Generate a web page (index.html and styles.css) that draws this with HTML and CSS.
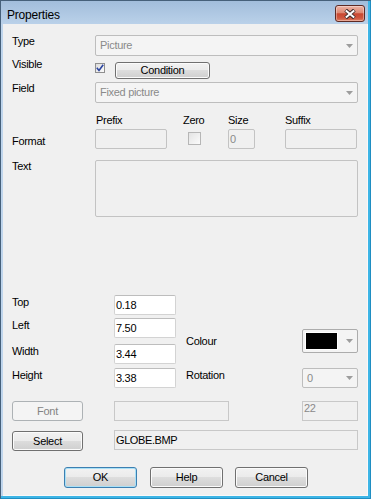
FILE: index.html
```html
<!DOCTYPE html>
<html lang="en">
<head>
<meta charset="utf-8">
<title>Properties</title>
<link rel="stylesheet" href="styles.css">
</head>
<body>
<div class="window">
  <div class="titlebar">
    <span class="title">Properties</span>
    <div class="close">
      <svg width="12" height="10" viewBox="0 0 12 10"><path d="M1.6 1 L10.4 9 M10.4 1 L1.6 9" stroke="#3e2c2a" stroke-width="3.8" fill="none"/><path d="M1.8 1.4 L10.2 8.6 M10.2 1.4 L1.8 8.6" stroke="#ffffff" stroke-width="2" fill="none"/></svg>
    </div>
  </div>
  <div class="client">
    <div class="row r-type">
      <span class="lbl">Type</span>
      <div class="combo dis w-wide"><span class="ctext">Picture</span><svg class="arrow" width="7" height="4" viewBox="0 0 7 4"><polygon points="0,0 7,0 3.5,4" fill="#9d9d9d"/></svg></div>
    </div>
    <div class="row r-visible">
      <span class="lbl">Visible</span>
      <span class="check on"><svg width="8" height="8" viewBox="0 0 8 8"><path d="M0.8 3.8 L3 6.4 L7.2 0.8" stroke="#2b44a0" stroke-width="1.6" fill="none"/></svg></span>
      <button class="btn b-cond">Condition</button>
    </div>
    <div class="row r-field">
      <span class="lbl">Field</span>
      <div class="combo dis w-wide"><span class="ctext">Fixed picture</span><svg class="arrow" width="7" height="4" viewBox="0 0 7 4"><polygon points="0,0 7,0 3.5,4" fill="#9d9d9d"/></svg></div>
    </div>
    <div class="row r-head">
      <span class="lbl"></span>
      <span class="h h-prefix">Prefix</span>
      <span class="h h-zero">Zero</span>
      <span class="h h-size">Size</span>
      <span class="h">Suffix</span>
    </div>
    <div class="row r-format">
      <span class="lbl lbl-format">Format</span>
      <span class="edit dis e-prefix"></span>
      <span class="check zero"></span>
      <span class="edit dis e-size">0</span>
      <span class="edit dis e-suffix"></span>
    </div>
    <div class="row r-text">
      <span class="lbl">Text</span>
      <span class="edit dis e-text"></span>
    </div>
    <div class="geom">
      <div class="gcol">
        <div class="grow"><span class="glbl">Top</span><span class="edit num">0.18</span></div>
        <div class="grow g-left"><span class="glbl">Left</span><span class="edit num">7.50</span></div>
        <div class="grow g-width"><span class="glbl">Width</span><span class="edit num">3.44</span></div>
        <div class="grow g-height"><span class="glbl">Height</span><span class="edit num">3.38</span></div>
      </div>
      <div class="gcol gright">
        <div class="grow g-colour"><span class="rlbl">Colour</span><div class="combo colour"><span class="swatch"></span><svg class="arrow" width="7" height="4" viewBox="0 0 7 4"><polygon points="0,0 7,0 3.5,4" fill="#9d9d9d"/></svg></div></div>
        <div class="grow g-rot"><span class="rlbl">Rotation</span><div class="combo dis rot"><span class="ctext">0</span><svg class="arrow" width="7" height="4" viewBox="0 0 7 4"><polygon points="0,0 7,0 3.5,4" fill="#9d9d9d"/></svg></div></div>
      </div>
    </div>
    <div class="row r-font">
      <button class="btn side dis" disabled>Font</button>
      <span class="edit ro e-fontname"></span>
      <span class="edit ro e-fsize">22</span>
    </div>
    <div class="row r-select">
      <button class="btn side">Select</button>
      <span class="edit ro e-file">GLOBE.BMP</span>
    </div>
    <div class="row r-actions">
      <button class="btn act default">OK</button>
      <button class="btn act a-help">Help</button>
      <button class="btn act a-cancel">Cancel</button>
    </div>
  </div>
</div>
</body>
</html>
```

FILE: styles.css
```css
* { box-sizing: border-box; }
html, body { margin: 0; padding: 0; }
body {
  background: #ffffff;
  font-family: "Liberation Sans", Arial, sans-serif;
  font-size: 11px;
  letter-spacing: -0.3px;
  color: #000;
}
.window {
  width: 371px;
  height: 499px;
  border: 1px solid #46607a;
  border-right-color: #1f8ec2;
  border-bottom-color: #1f8ec2;
  background:
    linear-gradient(to left, #3db5e6 2px, transparent 2px),
    linear-gradient(to top, #3db5e6 2px, transparent 2px),
    linear-gradient(#a2bddb 0, #bad1e9 23px, #bfd5ec 23px);
  display: flex;
  flex-direction: column;
}
.titlebar {
  height: 23px;
  flex: none;
  display: flex;
  align-items: flex-start;
  justify-content: space-between;
  padding: 0 5px 0 6px;
}
.title {
  font-size: 12px;
  letter-spacing: -0.2px;
  line-height: 14px;
  margin-top: 7px;
  color: #000;
}
.close {
  width: 30px;
  height: 17px;
  margin-top: 4px;
  border: 1px solid #5e2a24;
  border-radius: 3px;
  background: linear-gradient(#eeb3a5 0%, #dd8872 45%, #c84730 52%, #cf573f 80%, #e08062 100%);
  box-shadow: inset 0 0 0 1px rgba(255, 255, 255, 0.35);
  display: flex;
  align-items: center;
  justify-content: center;
}
.client {
  flex: 1;
  margin: 0 2px 2px 2px;
  background: #f0f0f0;
  border-right: 1px solid #f9f9f9;
  border-bottom: 1px solid #f9f9f9;
  padding: 11px 0 0 9px;
}
.row { display: flex; align-items: flex-start; }
.lbl { width: 83px; flex: none; line-height: 13px; }

.combo {
  display: flex;
  align-items: center;
  justify-content: space-between;
  height: 21px;
  border: 1px solid #bdbdbd;
  border-radius: 2px;
  padding: 0 4px 0 4px;
  flex: none;
}
.combo.dis { background: #f4f4f4; color: #8a8a8a; }
.ctext { line-height: 13px; }
.arrow { display: block; flex: none; }
.w-wide { width: 263px; }

.r-visible { margin-top: 2px; }
.check {
  width: 10px;
  height: 10px;
  margin-top: 5px;
  border: 1px solid #8f8f8f;
  background: linear-gradient(135deg, #dcdcdc, #fbfbfb);
  display: flex;
  align-items: center;
  justify-content: center;
  flex: none;
}
.btn {
  font: inherit;
  letter-spacing: inherit;
  color: #000;
  padding: 0;
  margin: 0;
  border: 1px solid #707070;
  border-radius: 3px;
  background: linear-gradient(#f2f2f2 0%, #ebebeb 49%, #dddddd 50%, #cfcfcf 100%);
  box-shadow: inset 0 0 0 1px #fbfbfb;
  display: flex;
  align-items: center;
  justify-content: center;
  line-height: 13px;
  flex: none;
}
.b-cond { width: 95px; height: 17px; margin-left: 10px; margin-top: 4px; }

.r-field { margin-top: 3px; }

.r-head { margin-top: 11px; line-height: 13px; }
.h { flex: none; }
.h-prefix { width: 88px; padding-left: 1px; }
.h-zero { width: 45px; }
.h-size { width: 57px; }

.r-format { margin-top: 2px; }
.lbl-format { margin-top: 6px; }
.edit {
  border: 1px solid #c6c6c6;
  height: 20px;
  display: flex;
  align-items: center;
  padding-left: 1px;
  line-height: 13px;
  flex: none;
}
.edit.dis { background: #f0f0f0; color: #8a8a8a; border-color: #c3c3c3; border-radius: 2px; }
.e-prefix { width: 72px; }
.check.zero {
  width: 13px;
  height: 13px;
  margin-left: 21px;
  margin-top: 3px;
  border-color: #b6b6b6;
  background: linear-gradient(135deg, #e3e3e3, #fbfbfb);
}
.e-size { width: 27px; margin-left: 27px; }
.e-suffix { width: 72px; margin-left: 30px; }

.r-text { margin-top: 11px; }
.e-text { width: 263px; height: 57px; }

.geom { display: flex; margin-top: 78px; }
.gcol { display: flex; flex-direction: column; width: 164px; flex: none; }
.grow { display: flex; align-items: flex-start; }
.glbl { width: 102px; flex: none; line-height: 13px; margin-top: 1px; }
.g-left { margin-top: 3px; }
.g-width { margin-top: 6px; }
.g-height { margin-top: 4px; }
.edit.num {
  width: 62px;
  background: #ffffff;
  border-color: #d3d3d3;
  border-top-color: #bdbdbd;
  border-radius: 2px;
}
.gright { margin-left: 10px; width: 172px; }
.rlbl { width: 116px; flex: none; line-height: 13px; }
.g-colour { margin-top: 34px; }
.g-colour .rlbl { margin-top: 6px; }
.combo.colour {
  width: 56px;
  height: 24px;
  border-color: #acacac;
  background: #f4f4f4;
  padding: 0 4px 0 3px;
}
.swatch {
  width: 31px;
  height: 16px;
  background: #000;
  box-shadow: 0 0 0 1px #ffffff;
  flex: none;
}
.g-rot { margin-top: 15px; }
.g-rot .rlbl { margin-top: 1px; }
.combo.rot { width: 56px; height: 20px; }

.r-font { margin-top: 13px; }
.btn.side { width: 71px; height: 20px; }
.btn.dis {
  border-color: #adb2b5;
  background: #f4f4f4;
  color: #838383;
  box-shadow: none;
}
.edit.ro { background: #f0f0f0; border-color: #c8c8c8; }
.e-fontname { width: 115px; margin-left: 31px; }
.e-fsize { width: 56px; margin-left: 73px; align-items: flex-start; color: #8a8a8a; }

.r-select { margin-top: 9px; }
.r-select .btn { margin-top: 1px; }
.e-file { width: 244px; margin-left: 31px; color: #000; letter-spacing: -0.4px; }

.r-actions { margin-top: 16px; padding-left: 52px; }
.btn.act { width: 73px; height: 21px; }
.btn.default { border-color: #3c7fb1; box-shadow: inset 0 0 0 1px #a9e0f6; }
.a-help { margin-left: 13px; }
.a-cancel { margin-left: 12px; }
```
